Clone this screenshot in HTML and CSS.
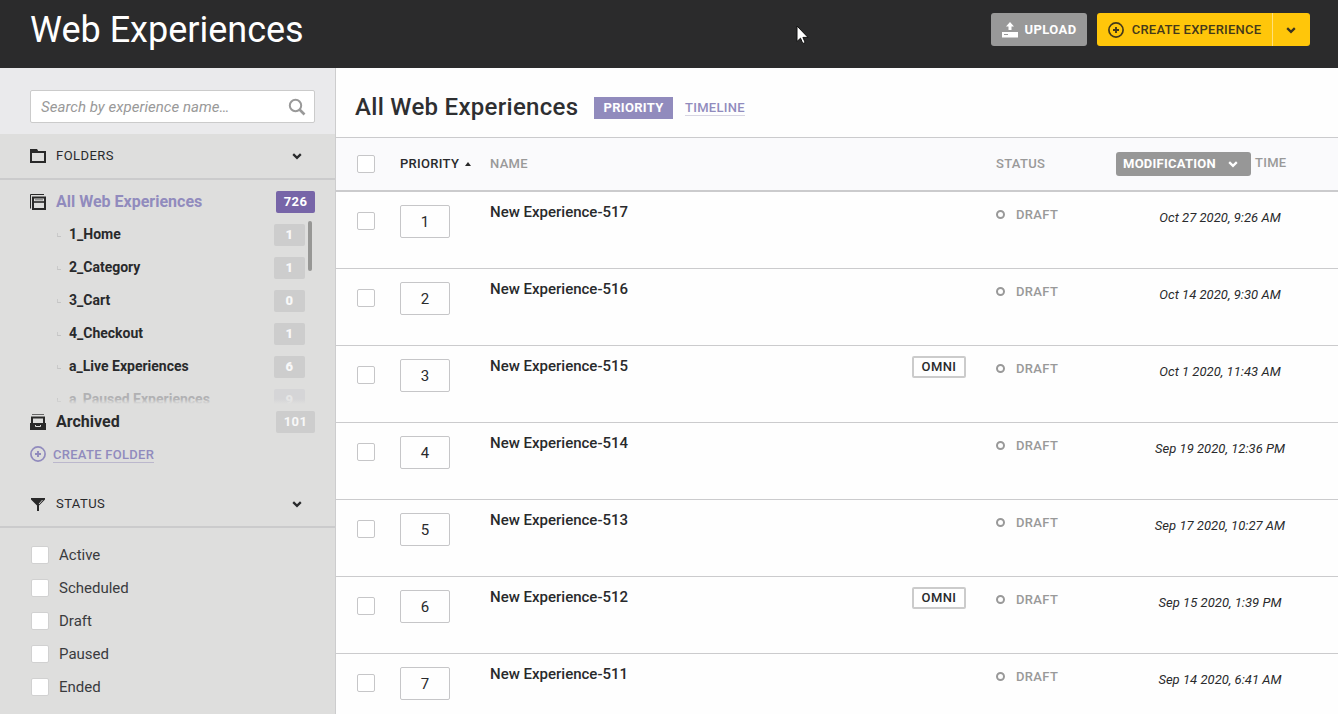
FILE: index.html
```html
<!DOCTYPE html>
<html lang="en">
<head>
<meta charset="utf-8">
<title>Web Experiences</title>
<link rel="stylesheet" href="styles.css">
</head>
<body>
<svg class="defs" width="0" height="0">
  <symbol id="chevron" viewBox="0 0 10 8"><path d="M1.200 2.200 5 5.800 8.800 2.200" fill="none" stroke="currentColor" stroke-width="2.300"/></symbol>
  <symbol id="plus" viewBox="0 0 16 16"><circle cx="8" cy="8" r="7.100" fill="none" stroke="currentColor" stroke-width="1.700"/><path d="M8 5v6M5 8h6" stroke="currentColor" stroke-width="1.900"/></symbol>
</svg>
<header class="topbar">
  <h1 class="page-title">Web Experiences</h1>
  <div class="actions">
    <button class="btn upload"><svg width="16" height="16" viewBox="0 0 16 16"><path d="M8 0 12 4.500H9.500V8H6.500V4.500H4z" fill="#fff"/><path d="M0 10h16v5.500H0z" fill="#fff"/><path d="M2 12.500h4" stroke="#999" stroke-width="1"/></svg><span>UPLOAD</span></button>
    <button class="btn create"><svg width="16" height="16"><use href="#plus"/></svg><span>CREATE EXPERIENCE</span></button>
    <button class="btn more"><svg width="10" height="8"><use href="#chevron"/></svg></button>
  </div>
  <svg class="cursor" width="13" height="20" viewBox="0 0 13 20"><path d="M1 1v15.500l3.500-3.300 2.300 5.300 2.400-1-2.300-5.100H12z" fill="#fff" stroke="#111" stroke-width="1"/></svg>
</header>
<div class="body">
  <aside class="sidebar">
    <div class="search-area"><div class="search"><span>Search by experience name…</span><svg width="18" height="18" viewBox="0 0 18 18"><circle cx="7.500" cy="7.500" r="5.700" fill="none" stroke="#999" stroke-width="2"/><path d="m11.500 11.500 5 5" stroke="#999" stroke-width="2.600"/></svg></div></div>
    <div class="section folders-head"><svg class="ico" width="16" height="16" viewBox="0 0 16 16"><path d="M1 14V4h14v10z" fill="none" stroke="#292929" stroke-width="2"/><path d="M0 1h7l1.500 2.500V5H0z" fill="#292929"/></svg><span>FOLDERS</span><svg class="chev" width="10" height="8"><use href="#chevron"/></svg></div>
    <div class="root-row"><svg class="ico" width="16" height="16" viewBox="0 0 16 16"><path d="M.5 14.500V.5H14" fill="none" stroke="#292929"/><path d="M3 3.500h12V15H3z" fill="none" stroke="#292929" stroke-width="2"/><path d="M3 8h12" stroke="#292929" stroke-width="1.600"/><path d="M5 5.800h8" stroke="#777" stroke-width="1"/></svg><span class="root-name active">All Web Experiences</span><b class="count big on">726</b></div>
    <div class="folder-list">
      <div class="folder"><i></i><span>1_Home</span><b class="count">1</b></div>
      <div class="folder"><i></i><span>2_Category</span><b class="count">1</b></div>
      <div class="folder"><i></i><span>3_Cart</span><b class="count">0</b></div>
      <div class="folder"><i></i><span>4_Checkout</span><b class="count">1</b></div>
      <div class="folder"><i></i><span>a_Live Experiences</span><b class="count">6</b></div>
      <div class="folder faded"><i></i><span>a_Paused Experiences</span><b class="count">9</b></div>
      <div class="scroll-thumb"></div>
    </div>
    <div class="root-row archived"><svg class="ico" width="16" height="16" viewBox="0 0 16 16"><path d="M2 .5h12" stroke="#666"/><path d="M2 9V3.500h12V9" fill="none" stroke="#292929" stroke-width="2"/><path d="M0 9h16v7H0z" fill="#292929"/><path d="M5.500 11v1.500h5V11" fill="none" stroke="#dededd"/></svg><span class="root-name">Archived</span><b class="count big">101</b></div>
    <div class="create-folder"><svg width="16" height="16"><use href="#plus"/></svg><a>CREATE FOLDER</a></div>
    <div class="section status-head"><svg class="ico" width="16" height="16" viewBox="0 0 16 16"><path d="M1 2h14v1.500L9 9.500V15H7V9.500L1 3.500z" fill="#292929"/><path d="m9 8 3.500-4" stroke="#dededd" stroke-width=".9"/></svg><span>STATUS</span><svg class="chev" width="10" height="8"><use href="#chevron"/></svg></div>
    <div class="filters">
      <label><i class="box"></i>Active</label>
      <label><i class="box"></i>Scheduled</label>
      <label><i class="box"></i>Draft</label>
      <label><i class="box"></i>Paused</label>
      <label><i class="box"></i>Ended</label>
    </div>
  </aside>
  <main class="main">
    <div class="main-head"><h2>All Web Experiences</h2><span class="tab-on">PRIORITY</span><a class="tab">TIMELINE</a></div>
    <div class="table">
      <div class="row head"><i class="check"></i><span class="sorted">PRIORITY<svg width="6" height="4"><path d="M0 4 3 0l3 4z" fill="#292929"/></svg></span><span class="name-h">NAME</span><span class="status-h">STATUS</span><span class="time-h"><span class="mod">MODIFICATION<svg width="10" height="8"><use href="#chevron"/></svg></span><span class="time-label">TIME</span></span></div>
      <div class="row"><i class="check"></i><span class="prio">1</span><div class="name"><span>New Experience-517</span></div><span class="status">DRAFT</span><time>Oct 27 2020, 9:26 AM</time></div>
      <div class="row"><i class="check"></i><span class="prio">2</span><div class="name"><span>New Experience-516</span></div><span class="status">DRAFT</span><time>Oct 14 2020, 9:30 AM</time></div>
      <div class="row"><i class="check"></i><span class="prio">3</span><div class="name"><span>New Experience-515</span><b class="omni">OMNI</b></div><span class="status">DRAFT</span><time>Oct 1 2020, 11:43 AM</time></div>
      <div class="row"><i class="check"></i><span class="prio">4</span><div class="name"><span>New Experience-514</span></div><span class="status">DRAFT</span><time>Sep 19 2020, 12:36 PM</time></div>
      <div class="row"><i class="check"></i><span class="prio">5</span><div class="name"><span>New Experience-513</span></div><span class="status">DRAFT</span><time>Sep 17 2020, 10:27 AM</time></div>
      <div class="row"><i class="check"></i><span class="prio">6</span><div class="name"><span>New Experience-512</span><b class="omni">OMNI</b></div><span class="status">DRAFT</span><time>Sep 15 2020, 1:39 PM</time></div>
      <div class="row"><i class="check"></i><span class="prio">7</span><div class="name"><span>New Experience-511</span></div><span class="status">DRAFT</span><time>Sep 14 2020, 6:41 AM</time></div>
    </div>
  </main>
</div>
</body>
</html>
```
FILE: styles.css
```css
*, *::before { box-sizing: border-box; }
body { margin: 0; height: 714px; overflow: hidden; display: flex; flex-direction: column; font-family: Roboto, sans-serif; color: #292a2c; background: #fefefe; }
.defs { position: absolute; }
svg { flex: none; display: block; }
span, a, time, h1, h2 { white-space: nowrap; }

.topbar { position: relative; flex: none; height: 68px; background: #2b2b2c; display: flex; justify-content: space-between; padding: 0 28px 0 30px; }
.page-title { margin: 9px 0 0; font-size: 36px; line-height: 42px; font-weight: 400; letter-spacing: 0; color: #fff; }
.actions { display: flex; padding-top: 13px; }
.btn { height: 33px; border: 0; border-radius: 3px; padding: 0; display: flex; align-items: center; justify-content: center; font: 500 13px/15px Roboto, sans-serif; letter-spacing: .4px; }
.upload { width: 96px; gap: 7px; margin-right: 10px; background: #999; color: #fff; font-weight: 700; }
.create { width: 175px; gap: 8px; background: #ffc60a; color: #44391a; border-radius: 3px 0 0 3px; letter-spacing: .22px; }
.more { width: 38px; padding-right: 2px; background: #ffc60a; color: #3c3420; border-left: 1px solid #ffe07a; border-radius: 0 3px 3px 0; }
.cursor { position: absolute; left: 796px; top: 25px; }

.body { display: flex; flex: 1; min-height: 0; }
.sidebar { width: 336px; flex: none; background: #dededd; border-right: 1px solid #cdcdce; }
.search-area { height: 66px; background: #eaeaec; padding: 22px 20px 0 30px; }
.search { height: 33px; background: #fff; border: 1px solid #cbcbcb; border-radius: 2px; display: flex; align-items: center; justify-content: space-between; padding: 0 8px 0 10px; font-size: 15px; font-style: italic; letter-spacing: .04px; color: #999; }
.section { height: 46px; border-bottom: 2px solid #cbcbcc; display: flex; align-items: center; padding: 0 33px 0 30px; font-size: 13px; font-weight: 400; letter-spacing: .45px; }
.section span { margin-left: 10px; padding-bottom: 2px; }
.chev { margin-left: auto; }
.root-row { display: flex; align-items: center; height: 38px; padding: 6px 20px 0 30px; }
.root-name { margin-left: 10px; padding-bottom: 2px; font-size: 16px; font-weight: 700; flex: 1; }
.active { color: #918bbd; }
.count { width: 31px; height: 22px; border-radius: 2px; background: #cdcdcd; color: #f8f8f8; font-size: 13px; line-height: 22px; text-align: center; letter-spacing: .3px; }
.big { width: 39px; }
.on { background: #7765a8; color: #fff; }
.folder-list { position: relative; height: 186px; overflow: hidden; }
.folder { height: 33px; display: flex; align-items: center; padding: 1px 30px 0 57px; font-size: 14px; font-weight: 700; }
.folder i { width: 4px; height: 4px; border-left: 1px solid #cacaca; border-bottom: 1px solid #c5c5c5; }
.folder span { flex: 1; margin-left: 8px; padding-bottom: 2px; }
.faded span { color: #b1b1b3; }
.faded .count { background: #d5d5d7; color: #e6e6e6; }
.folder-list::after { content: ""; position: absolute; left: 0; right: 0; bottom: 0; height: 5px; background: linear-gradient(#dededd00, #dededd); }
.scroll-thumb { position: absolute; left: 308px; top: 3px; width: 4px; height: 50px; border-radius: 2px; background: #979795; }
.archived { height: 34px; padding-top: 2px; }
.create-folder { display: flex; align-items: center; gap: 7px; padding-left: 30px; height: 32px; color: #918bbd; font-size: 13px; font-weight: 500; letter-spacing: .28px; }
.create-folder a { line-height: 15px; padding-top: 1px; border-bottom: 1px solid #bbb7cc; }
.status-head { margin-top: 12px; }
.filters { padding-top: 10px; }
.filters label { height: 33px; display: flex; align-items: center; padding-left: 31px; gap: 10px; font-size: 15px; color: #3a3b3d; }
.box { width: 18px; height: 18px; background: #fff; border: 1px solid #d1d1d1; border-radius: 2px; }

.main { flex: 1; min-width: 0; }
.main-head { height: 70px; border-bottom: 1px solid #cbcbcd; display: flex; align-items: flex-start; padding-left: 19px; font-size: 13px; font-weight: 500; letter-spacing: .3px; color: #918bbd; }
h2 { width: 223px; margin: 24px 16px 0 0; font-size: 24px; line-height: 30px; font-weight: 500; letter-spacing: .3px; color: #2e2f31; }
.tab-on { width: 79px; height: 22px; margin: 29px 12px 0 0; line-height: 22px; text-align: center; color: #fff; background: #918bbd; font-weight: 700; }
.tab { margin-top: 32px; line-height: 15px; border-bottom: 1px solid #d7d5e2; }
.row { height: 77px; border-bottom: 1px solid #cbcbcd; display: grid; grid-template-columns: 43px 90px 506px 120px 208px; padding-left: 21px; align-items: start; }
.check { width: 18px; height: 18px; margin-top: 20px; border: 1px solid #c6c6c8; border-radius: 2px; background: #fff; }
.head { height: 54px; background: #fafafc; border-bottom-width: 2px; font-size: 13px; font-weight: 500; letter-spacing: .3px; color: #999; line-height: 16px; }
.head .check { margin-top: 17px; }
.sorted { margin-top: 18px; color: #292a2c; display: flex; align-items: center; gap: 6px; }
.name-h, .status-h { margin-top: 18px; }
.time-h { display: flex; gap: 4px; padding-top: 14px; }
.mod { width: 135px; height: 24px; display: flex; align-items: center; justify-content: space-between; padding: 0 13px 0 7px; border-radius: 3px; color: #fff; background: #979797; font-weight: 700; letter-spacing: .25px; }
.time-label { margin-top: 3px; }
.prio { width: 50px; height: 33px; margin-top: 13px; border: 1px solid #c6c6c8; border-radius: 2px; font-size: 15px; line-height: 32px; text-align: center; }
.name { display: flex; justify-content: space-between; padding: 10px 30px 0 0; font-size: 15px; line-height: 20px; font-weight: 500; letter-spacing: 0; }
.omni { width: 54px; height: 22px; border: 2px solid #cbcbcb; border-radius: 2px; font-size: 13px; font-weight: 500; line-height: 18px; text-align: center; letter-spacing: .4px; }
.status { margin-top: 15px; font-size: 13px; line-height: 16px; font-weight: 500; letter-spacing: .35px; color: #999; display: flex; align-items: center; gap: 11px; }
.status::before { content: ""; width: 9px; height: 9px; margin-bottom: 1px; border: 2px solid #999; border-radius: 50%; }
time { margin-top: 18px; font-size: 13px; line-height: 16px; font-style: italic; text-align: center; letter-spacing: .03px; }
```
